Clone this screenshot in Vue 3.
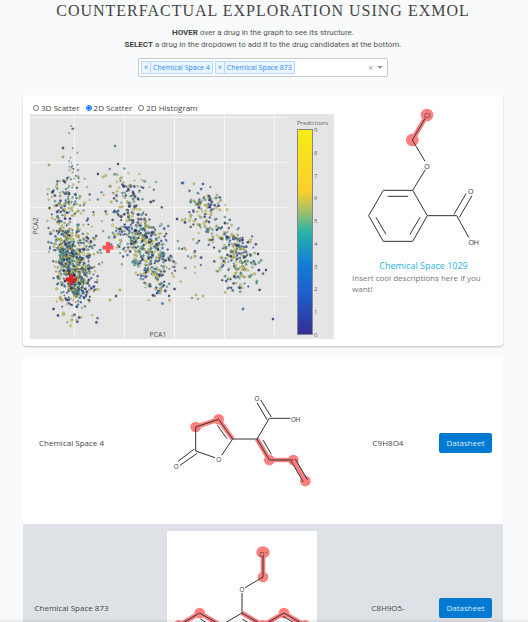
<script setup>
import { ref } from 'vue'

const modes = ['3D Scatter', '2D Scatter', '2D Histogram']
const mode = ref('2D Scatter')
const selected = ref(['Chemical Space 4', 'Chemical Space 873'])
const query = ref('')
const formulas = { 'Chemical Space 4': 'C9H8O4', 'Chemical Space 873': 'C8H9O5-' }

const remove = (name) => {
  selected.value = selected.value.filter((item) => item !== name)
}

// Deterministic random source, so the cloud is the same on each load.
let seed = 1029
const random = () => {
  seed = (seed + 0x6d2b79f5) | 0
  let t = Math.imul(seed ^ (seed >>> 15), 1 | seed)
  t = (t + Math.imul(t ^ (t >>> 7), 61 | t)) ^ t
  return ((t ^ (t >>> 14)) >>> 0) / 4294967296
}
const spread = () => (random() + random() + random() - 1.5) * 1.5

// cx, cy, x spread, y spread, lean (x per y), count, radius
const clusters = [
  [72, 158, 4, 20, 0, 20, 0.8],
  [67, 203, 15, 18, 0, 120, 1.1],
  [64, 238, 8, 18, 0, 130, 1.1],
  [71, 268, 10, 20, 0.1, 340, 1.1],
  [86, 258, 9, 24, 0, 110, 1.1],
  [76, 296, 13, 18, 0, 130, 1.1],
  [130, 194, 15, 18, 0.2, 90, 1.1],
  [133, 228, 18, 17, 0.3, 150, 1.1],
  [147, 250, 16, 18, 0.3, 240, 1.1],
  [155, 280, 10, 16, 0.4, 70, 1.1],
  [205, 209, 14, 14, 0.1, 105, 1.1],
  [226, 240, 14, 14, 0.4, 90, 1.1],
  [238, 266, 14, 18, 0.2, 150, 1.1],
  [190, 255, 9, 11, 0.2, 16, 1.1]
]
const palette = ['#352a87', '#3b4a9c', '#2c6cb0', '#2b8aa0', '#4fa98b', '#a9b34f', '#d9c72e', '#d9c72e', '#e9dc3c', '#28305c']
const points = []
for (const [cx, cy, sx, sy, lean, count, r] of clusters) {
  for (let i = 0; i < count; i++) {
    const dy = spread() * sy
    points.push({
      x: Math.round((cx + spread() * sx + dy * lean) * 10) / 10,
      y: Math.round((cy + dy) * 10) / 10,
      r: r * (0.7 + random() * 0.5),
      fill: palette[Math.floor(random() * palette.length)]
    })
  }
}
const outliers = [
  [115, 146, 3], [182, 183, 2], [183, 183, 2], [203, 184, 1], [273, 319, 0], [243, 309, 2],
  [196, 295, 6], [192, 298, 5], [198, 299, 6], [203, 296, 6], [110, 300, 6], [116, 296, 0],
  [98, 174, 0], [103, 177, 6], [118, 164, 9], [49, 165, 5], [63, 148, 9], [63, 157, 5], [120, 290, 6],
  [71, 126, 9], [69, 133, 9], [259, 270, 0], [266, 270, 0], [258, 254, 9], [177, 219, 0], [182, 220, 6]
]
for (const [x, y, c] of outliers) points.push({ x, y, r: y < 140 ? 0.6 : 1.2, fill: palette[c] })

const ticks = Array.from({ length: 10 }, (_, i) => ({ label: 9 - i, y: 129 + (i * 205) / 9 }))
</script>

<template>
  <main class="page">
    <header class="intro">
      <h1>COUNTERFACTUAL EXPLORATION USING EXMOL</h1>
      <p><strong>HOVER</strong> over a drug in the graph to see its structure.</p>
      <p><strong>SELECT</strong> a drug in the dropdown to add it to the drug candidates at the bottom.</p>
    </header>

    <div class="picker">
      <span v-for="name in selected" :key="name" class="tag">
        <button type="button" class="tag-remove" :aria-label="'Remove ' + name" @click="remove(name)">×</button>
        <span class="tag-name">{{ name }}</span>
      </span>
      <input v-model="query" class="search" type="text" aria-label="Select drugs" />
      <button type="button" class="clear" aria-label="Clear all" @click="selected = []">×</button>
      <button type="button" class="toggle" aria-label="Open list"><span class="caret"></span></button>
    </div>

    <section class="card">
      <div class="chart">
        <div class="modes">
          <label v-for="name in modes" :key="name">
            <input v-model="mode" type="radio" name="mode" :value="name" />
            <span>{{ name }}</span>
          </label>
        </div>
        <svg class="plot" viewBox="30 114 304 225" role="img" aria-label="Scatter plot of PCA1 and PCA2">
          <defs>
            <linearGradient id="scale" x1="0" y1="0" x2="0" y2="1">
              <stop offset="0" stop-color="#f5ed13" />
              <stop offset="0.3" stop-color="#fbcf2b" />
              <stop offset="0.4" stop-color="#a3be6a" />
              <stop offset="0.5" stop-color="#26b4a6" />
              <stop offset="0.66" stop-color="#127cd8" />
              <stop offset="0.8" stop-color="#1f5fcb" />
              <stop offset="1" stop-color="#352c93" />
            </linearGradient>
          </defs>
          <rect x="30" y="114" width="304" height="225" fill="#e5e5e5" />
          <path
            d="M30 117.500H287M30 162.500H287M30 207.500H287M30 251.500H287M30 296.500H287M74.500 114V339M124.500 114V339M174.500 114V339M224.500 114V339M274.500 114V339"
            stroke="#f6f6f6"
          />
          <circle
            v-for="(p, i) in points"
            :key="i"
            :cx="p.x"
            :cy="p.y"
            :r="p.r"
            :fill="p.fill"
            class="dot"
          />
          <path d="M69 274h4v3.500h3.500v4H73v3.500h-4v-3.500h-3.500v-4H69z" fill="#e8181c" fill-opacity="0.85" />
          <path d="M106 242h4v3.500h3.500v4H110v3.500h-4v-3.500h-3.500v-4H106z" fill="#ff3b3b" fill-opacity="0.85" />
          <rect x="297.500" y="129.500" width="15" height="205" fill="url(#scale)" stroke="#83868f" />
          <text x="297" y="125" class="tick">Predictions</text>
          <text v-for="t in ticks" :key="t.label" x="314" :y="t.y + 3" class="tick">{{ t.label }}</text>
          <text x="158" y="337" class="axis">PCA1</text>
          <text x="0" y="0" transform="translate(38 226) rotate(-90)" class="axis">PCA2</text>
        </svg>
      </div>

      <aside class="detail">
        <svg class="molecule" viewBox="36 36 429 450" role="img" aria-label="Structure of Chemical Space 1029">
          <g class="glow">
            <path d="M261 75L217 150" />
            <circle cx="261" cy="75" r="19" />
            <circle cx="217" cy="150" r="19" />
          </g>
          <path
            class="bond"
            d="M255 86L217 150L255 214M256 239L218 301H130L86 377L130 454H218L262 377L218 301M204 319H143M108 382L138 433M240 382L210 433M262 377H350M342 373L378 311M358 382L396 317M350 377L386 442"
          />
          <g class="atom">
            <text x="261" y="84">Cl</text>
            <text x="261" y="237">O</text>
            <text x="392" y="313">O</text>
            <text x="401" y="465">OH</text>
          </g>
        </svg>
        <a href="#" class="name">Chemical Space 1029</a>
        <p class="about">Insert cool descriptions here if you want!</p>
      </aside>
    </section>

    <table class="drugs" aria-label="Drug candidates">
      <colgroup>
        <col class="col-name" />
        <col class="col-image" />
        <col class="col-formula" />
        <col class="col-link" />
      </colgroup>
      <tbody>
        <tr v-for="name in selected" :key="name">
          <td>{{ name }}</td>
          <td class="image-cell">
            <svg
              v-if="name === 'Chemical Space 4'"
              class="structure"
              viewBox="21 -42 450 450"
              role="img"
              aria-label="Structure of Chemical Space 4"
            >
              <g class="glow">
                <path d="M107 141L176 118L218 177M291 177L328 240H400L436 303" />
                <circle cx="107" cy="141" r="16" />
                <circle cx="176" cy="118" r="16" />
                <circle cx="328" cy="240" r="16" />
                <circle cx="400" cy="240" r="16" />
                <circle cx="436" cy="303" r="16" />
              </g>
              <path
                class="bond"
                d="M165 233L107 213V141L176 118L218 177L185 226M172 136L201 176M103 207L54 244M111 220L60 256M218 177H291L328 115H391M321 119L291 68M334 111L302 60M291 177L328 240H400M309 180L334 223M393 243L430 306M406 237L442 299"
              />
              <g class="atom">
                <text x="49" y="266">O</text>
                <text x="176" y="246">O</text>
                <text x="291" y="62">O</text>
                <text x="407" y="125">OH</text>
              </g>
            </svg>
            <svg v-else class="structure" viewBox="501 63 450 450" role="img" :aria-label="'Structure of ' + name">
              <g class="glow">
                <path d="M789 129V201M536 346L599 309L663 346M726 309L789 346L852 309L915 346" />
                <ellipse cx="789" cy="127" rx="20" ry="18" />
                <circle cx="789" cy="201" r="16" />
                <circle cx="536" cy="346" r="16" />
                <circle cx="599" cy="309" r="16" />
                <circle cx="789" cy="346" r="16" />
                <circle cx="852" cy="309" r="16" />
                <circle cx="915" cy="346" r="16" />
              </g>
              <path
                class="bond"
                d="M789 138V201L735 233M726 249V309L663 346L599 309L536 346M726 309L789 346L852 309L915 346M601 327L641 351M728 328L768 352M849 319L903 350M663 346V419L726 455L789 419V346"
              />
              <g class="atom">
                <text x="785" y="140">O</text>
                <text x="798" y="132">-</text>
                <text x="726" y="247">O</text>
              </g>
            </svg>
          </td>
          <td>{{ formulas[name] }}</td>
          <td class="link-cell"><a href="#" class="datasheet">Datasheet</a></td>
        </tr>
      </tbody>
    </table>
  </main>
</template>

<style>
body {
  margin: 0;
  background: #f9fafc;
}
</style>

<style scoped>
.page {
  position: relative;
  box-sizing: border-box;
  height: 100vh;
  overflow: hidden;
  padding: 0 25px 0 23px;
  background: #f9fafc;
  color: #444;
  font-family: "Open Sans", sans-serif;
  font-size: 8px;
  line-height: 12px;
}
.page::after {
  content: "";
  position: absolute;
  inset: auto 0 0 0;
  height: 4px;
  background: linear-gradient(rgba(0, 0, 0, 0), rgba(0, 0, 0, 0.08));
}
.intro {
  text-align: center;
}
h1 {
  margin: 0 0 5px;
  color: #444;
  font-family: "Liberation Serif", serif;
  font-size: 16px;
  font-weight: 400;
  letter-spacing: 1px;
  line-height: 22px;
  white-space: nowrap;
}
.intro p {
  margin: 0;
  color: #555;
  font-family: Roboto, sans-serif;
}
.intro strong {
  color: #444;
}
.picker {
  display: flex;
  align-items: center;
  gap: 2px;
  box-sizing: border-box;
  width: 250px;
  height: 19px;
  margin: 7px auto 0;
  padding: 0 4px 0 2px;
  border: 1px solid #c8c8c8;
  border-radius: 2px;
  background: #fff;
}
.picker button {
  padding: 0;
  border: 0;
  background: none;
  font: inherit;
}
.tag {
  display: flex;
  flex: none;
  border: 1px solid #b5d8fb;
  border-radius: 1px;
  background: #ebf5ff;
  color: #1b8cff;
  font-size: 7px;
  line-height: 11px;
}
.picker .tag-remove {
  width: 9px;
  border-right: 1px solid #b5d8fb;
  color: inherit;
}
.tag-name {
  padding: 0 2px;
}
.search {
  flex: 1;
  min-width: 0;
  padding: 0;
  border: 0;
  outline: 0;
  background: none;
  font: inherit;
}
.clear,
.toggle {
  display: flex;
  align-items: center;
  justify-content: center;
  width: 7px;
  color: #999;
}
.picker .clear {
  font-size: 9px;
}
.caret {
  border: 3px solid transparent;
  border-top-color: #999;
  border-bottom: 0;
}
.card {
  display: grid;
  grid-template-columns: 304fr 143fr;
  gap: 18px;
  margin-top: 18px;
  padding: 7px 8px 7px 7px;
  border-radius: 4px;
  background: #fff;
  box-shadow: 0 1px 2px rgba(0, 0, 0, 0.25);
}
.modes {
  display: flex;
  gap: 6px;
  padding-left: 3px;
}
.modes label {
  display: flex;
  align-items: center;
  gap: 2px;
}
.modes input {
  width: 6px;
  height: 6px;
  margin: 0;
}
.plot,
.molecule {
  display: block;
  width: 100%;
  height: auto;
}
.dot {
  fill-opacity: 0.8;
  stroke: #2f3f4f;
  stroke-opacity: 0.4;
  stroke-width: 0.5px;
}
.tick {
  fill: #666;
  font-size: 6px;
}
.axis {
  fill: #555;
  font-size: 7px;
  text-anchor: middle;
}
.detail {
  display: flex;
  flex-direction: column;
}
.glow {
  fill: #ff7f7f;
}
.glow path {
  fill: none;
  stroke: #ff7f7f;
  stroke-width: 14px;
  stroke-linejoin: round;
}
.bond {
  fill: none;
  stroke: #333;
  stroke-width: 3px;
}
.atom {
  fill: #444;
  font-family: "Liberation Sans", sans-serif;
  font-size: 21px;
  text-anchor: middle;
}
.name {
  margin-top: 8px;
  color: #2cb4dc;
  font-size: 9px;
  text-align: center;
  text-decoration: none;
}
.about {
  margin: 0;
  color: #777;
  line-height: 11px;
}
.drugs {
  width: 100%;
  margin-top: 13px;
  border-collapse: collapse;
  table-layout: fixed;
  background: #fff;
}
.col-name {
  width: 97px;
}
.col-formula {
  width: 48px;
}
.col-link {
  width: 91px;
}
.drugs tr:nth-child(even) {
  background: #dee2e6;
}
.drugs td {
  padding: 9px 0 7px;
  text-align: center;
  vertical-align: middle;
  white-space: nowrap;
}
.drugs .image-cell {
  padding: 7px 0 8px;
}
.drugs .link-cell {
  padding-left: 16px;
}
.structure {
  display: block;
  width: 150px;
  height: 150px;
  margin: 0 auto;
  background: #fff;
}
.structure .atom {
  font-size: 19px;
}
.datasheet {
  display: inline-block;
  padding: 4px 7px;
  border-radius: 2px;
  background: #0079d3;
  color: #d9ecfb;
  text-decoration: none;
}
</style>
